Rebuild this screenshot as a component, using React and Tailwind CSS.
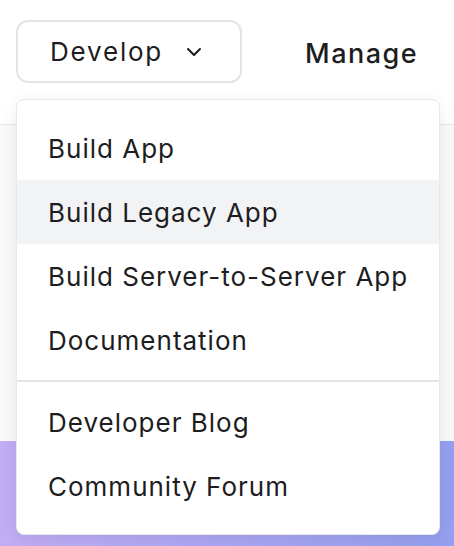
import { ChevronDown } from "lucide-react";

const mainItems = [
  "Build App",
  "Build Legacy App",
  "Build Server-to-Server App",
  "Documentation",
];

const extraItems = ["Developer Blog", "Community Forum"];

function MenuItem({ label, active }) {
  return (
    <div
      className={`h-16 flex items-center pl-[31px] text-[26px] tracking-[1px] text-[#1d1d21] ${
        active ? "bg-[#f2f3f5]" : ""
      }`}
    >
      {label}
    </div>
  );
}

export default function App() {
  return (
    <div
      className="relative h-[546px] w-[454px] overflow-hidden bg-[#f9f9f9]"
      style={{ fontFamily: "Inter, 'Noto Sans', sans-serif" }}
    >
      {/* HEADER */}
      <header className="h-[125px] bg-white border-b border-[#e6e6e8] flex items-start pt-5 pl-4">
        <button className="h-[63px] w-[226px] rounded-xl border-2 border-[#e3e3e8] bg-white flex items-center pl-[32px] text-[26px] tracking-[1.8px] text-[#1d1d21]">
          Develop
          <ChevronDown size={24} strokeWidth={2} className="ml-[19px]" />
        </button>
        <span className="ml-[63px] mt-[14px] text-[27px] tracking-[1.5px] font-medium text-[#1d1d21]">
          Manage
        </span>
      </header>

      {/* BODY */}
      <div className="h-[316px]" />
      <div className="h-[105px] bg-gradient-to-r from-[#c2adf5] to-[#949ff0]" />

      {/* DROPDOWN */}
      <div className="absolute left-4 top-[99px] w-[424px] rounded-lg border border-[#e8e8ea] bg-white py-4 shadow-[0_4px_16px_rgba(0,0,0,0.08)]">
        {mainItems.map((label) => (
          <MenuItem key={label} label={label} active={label === "Build Legacy App"} />
        ))}
        <div className="my-2 h-[2px] bg-[#e3e3e5]" />
        {extraItems.map((label) => (
          <MenuItem key={label} label={label} />
        ))}
      </div>
    </div>
  );
}
